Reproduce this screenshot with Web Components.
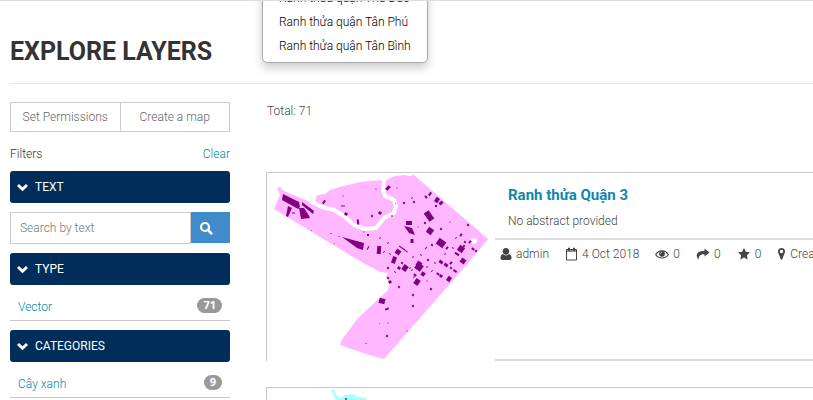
<!DOCTYPE html>
<html lang="en">
<head>
<meta charset="utf-8">
<title>Explore Layers</title>
<style>
body { margin: 0; background: #fff; color: #444; font: 300 12px/20px Roboto, "Liberation Sans", sans-serif; }
</style>
</head>
<body>
<explore-page>
  <suggest-menu slot="menu"></suggest-menu>
  <filter-sidebar slot="sidebar">
    <filter-section label="TEXT"><search-box></search-box></filter-section>
    <filter-section label="TYPE"><filter-row name="Vector" count="71"></filter-row></filter-section>
    <filter-section label="CATEGORIES"><filter-row name="Cây xanh" count="9"></filter-row></filter-section>
  </filter-sidebar>
  <layer-card heading="Ranh thửa Quận 3" abstract="No abstract provided" owner="admin" date="4 Oct 2018"><district-map slot="thumb"></district-map></layer-card>
  <layer-card><river-map slot="thumb"></river-map></layer-card>
</explore-page>
<script>
const define = (name, html) => customElements.define(name, class extends HTMLElement {
  connectedCallback() {
    if (this.shadowRoot) return;
    const t = document.createElement('template');
    t.innerHTML = typeof html === 'function' ? html(this) : html;
    this.attachShadow({ mode: 'open' }).append(t.content.cloneNode(true));
  }
});

const icons = {
  user: ['0 0 12 14', '<path d="M6 1c2 0 3.200 1.300 3.200 3.200S8 7.800 6 7.800 2.800 6.200 2.800 4.200 4 1 6 1z"/><path d="M3 7c.8.900 1.800 1.400 3 1.400S8.200 7.900 9 7c1.600.3 2.500 1.800 2.500 4 0 1.300-.8 2-2 2h-7c-1.200 0-2-.7-2-2 0-2.200.9-3.700 2.500-4z"/>'],
  calendar: ['0 0 13 14', '<path d="M1.500 2.500h10v10.500h-10z" fill="none" stroke="currentColor"/><path d="M1 2.500h11v2.500H1z" opacity=".6"/><path d="M3 .8h2v3H3zM8 .8h2v3H8z"/>'],
  eye: ['0 0 14 14', '<path d="M.7 7.500C3.500 2.600 10.500 2.600 13.300 7.500 10.500 12.200 3.500 12.200.7 7.500z" fill="none" stroke="currentColor" stroke-width="1.100"/><circle cx="7" cy="6.800" r="2.900"/><path d="M5.500 6.800C5.500 5.900 6.100 5.300 7 5.300" stroke="#fff" stroke-width=".7" fill="none"/>'],
  share: ['0 0 14 14', '<path d="M8.500 1.500l5 4-5 4V7.200C4.500 7 2.600 8.400 2.600 12.600 1.200 11 .6 9.400.8 7.800 1.200 5 3.800 3.800 8.500 3.900z"/>'],
  star: ['0 0 14 14', '<path d="M7 1l1.800 3.800 4.200.5-3.100 2.900.8 4.200L7 10.400l-3.700 2 .8-4.200L1 5.300l4.200-.5z"/>'],
  pin: ['0 0 9 14', '<path fill-rule="evenodd" d="M4.500 1C6.600 1 8 2.500 8 4.400c0 1.500-1.600 4.200-2.600 7.500-.2 1.100-1.600 1.100-1.800 0C2.600 8.600 1 5.900 1 4.400 1 2.500 2.400 1 4.500 1zm0 1.800a1.700 1.700 0 1 0 0 3.400 1.700 1.700 0 0 0 0-3.400z"/>'],
  search: ['0 0 14 14', '<circle cx="6" cy="6" r="4" fill="none" stroke="currentColor" stroke-width="2.200"/><path d="M9 9l3.300 3.300" stroke="currentColor" stroke-width="2.600" stroke-linecap="round"/>'],
  chevron: ['0 0 13 14', '<path d="M2 5l4.500 4.300L11 5" fill="none" stroke="currentColor" stroke-width="2.900"/>']
};
define('ui-icon', el => {
  const [box, body] = icons[el.getAttribute('name')];
  const w = box.split(' ')[2];
  return `<style>:host{display:inline-flex;flex:none}svg{display:block;fill:currentColor}</style><svg width="${w}" height="14" viewBox="${box}" aria-hidden="true">${body}</svg>`;
});

define('explore-page', `<style>
  :host { display: block; position: relative; height: 100vh; overflow: hidden; box-sizing: border-box; border-top: 1px solid #ddd; padding: 0 0 0 10px; }
  header { border-bottom: 1px solid #e4e4e4; padding: 34px 0 14px; }
  h1 { margin: 0; font-size: 25px; line-height: 34px; font-weight: 700; color: #333; }
  .cols { display: flex; gap: 36px; padding-top: 18px; }
  ::slotted([slot=sidebar]) { flex: 0 0 220px; }
  main { flex: 1; min-width: 0; }
  .total { margin: -1px 0 51px 1px; }
  ::slotted([slot=menu]) { position: absolute; left: 262px; bottom: calc(100% - 62px); z-index: 2; }
</style>
<slot name="menu"></slot>
<header><h1>EXPLORE LAYERS</h1></header>
<div class="cols"><slot name="sidebar"></slot><main><p class="total">Total: 71</p><slot></slot></main></div>`);

define('suggest-menu', `<style>
  :host { display: block; background: #fff; border: 1px solid #aaa; border-radius: 0 0 5px 5px; box-shadow: 0 5px 10px rgba(0,0,0,.2); padding: 4px 16px; color: #000; line-height: 24px; }
  ul { list-style: none; margin: 0; padding: 0; }
  a { color: inherit; text-decoration: none; white-space: nowrap; }
</style><ul><li><a href="#">Ranh thửa quận Thủ Đức</a></li><li><a href="#">Ranh thửa quận Tân Phú</a></li><li><a href="#">Ranh thửa quận Tân Bình</a></li></ul>`);

define('filter-sidebar', `<style>
  :host { display: block; }
  .actions { display: flex; }
  button { flex: 1; box-sizing: border-box; height: 30px; padding: 0; border: 1px solid #ccc; background: #fff; color: #666; font: inherit; white-space: nowrap; }
  button + button { margin-left: -1px; }
  .bar { display: flex; justify-content: space-between; padding: 12px 0 7px; color: #333; }
  a { color: #0087a8; text-decoration: none; }
</style>
<div class="actions"><button>Set Permissions</button><button>Create a map</button></div>
<div class="bar"><span>Filters</span><a href="#">Clear</a></div><slot></slot>`);

define('filter-section', el => `<style>
  :host { display: block; margin-bottom: 9px; }
  button { display: flex; align-items: center; gap: 6px; width: 100%; height: 32px; border: 0; border-radius: 3px; padding: 0 6px; background: #002d59; color: #fff; font: inherit; font-weight: 400; }
</style><button aria-expanded="true"><ui-icon name="chevron"></ui-icon>${el.getAttribute('label')}</button><slot></slot>`);

define('search-box', `<style>
  :host { display: flex; margin-top: 9px; }
  input { flex: 1; min-width: 0; box-sizing: border-box; height: 32px; border: 1px solid #ccc; padding: 0 9px; font: inherit; color: #444; border-radius: 0; }
  input::placeholder { color: #777; }
  button { width: 39px; height: 31px; border: 0; padding: 0 9px 0 0; background: #428bca; color: #fff; display: flex; align-items: center; justify-content: center; }
</style><input type="text" placeholder="Search by text" aria-label="Search by text"><button aria-label="Search"><ui-icon name="search"></ui-icon></button>`);

define('filter-row', el => `<style>
  :host { display: flex; justify-content: space-between; align-items: center; border-bottom: 1px solid #c8c8c8; padding: 6px 8px 0; height: 29px; }
  a { color: #0087a8; text-decoration: none; padding-top: 2px; }
  span { background: #999; color: #fff; font: 700 11px/13px "Open Sans", sans-serif; padding: 0 6px 2px; border-radius: 8px; }
</style><a href="#">${el.getAttribute('name')}</a><span>${el.getAttribute('count')}</span>`);

define('layer-card', el => {
  const head = el.getAttribute('heading');
  const meta = head ? `<div class="text"><h2><a href="#">${head}</a></h2><p>${el.getAttribute('abstract')}</p></div>
  <ul><li><ui-icon name="user"></ui-icon>${el.getAttribute('owner')}</li><li><ui-icon name="calendar"></ui-icon>${el.getAttribute('date')}</li><li><ui-icon name="eye"></ui-icon>0</li><li><ui-icon name="share"></ui-icon>0</li><li><ui-icon name="star"></ui-icon>0</li><li><ui-icon name="pin"></ui-icon>Create a Map</li></ul>` : '';
  return `<style>
  :host { display: flex; border: solid #c8c8c8; border-width: 1px 0 0 1px; margin-bottom: 26px; overflow: hidden; }
  .body { flex: 1; min-width: 0; box-sizing: border-box; border-bottom: 2px solid #ddd; }
  .text { padding: 10px 13px 7px; border-bottom: 2px solid #ddd; }
  h2 { margin: 0; font-size: 15px; line-height: 24px; font-weight: 700; }
  a { color: #0f87ad; text-decoration: none; }
  p { margin: 4px 0 0; }
  ul { display: flex; gap: 16px; list-style: none; margin: 0; padding: 4px 5px; white-space: nowrap; }
  li { display: flex; align-items: center; gap: 4px; flex: none; }
</style><slot name="thumb"></slot><div class="body">${meta}</div>`;
});

const block = (x, y, w, h, r = 35) => `<rect x="${x - w / 2}" y="${y - h / 2}" width="${w}" height="${h}" transform="rotate(${r} ${x} ${y})"/>`;
const blocks = [
  [324,202,2,4],[343,196,1,1],[343,206,4,1,0],[346,214,3,3],[358,222,2,5,-5],[372,216,2,2],[380,213,3,3],[376,189,1,1],
  [388,188,3,5,45],[397,188,1,1],[404,203,2,2],[412,198,1,2],[414,202,2,2],[426,197,2,3,-35],[430,194,2,4],[437,200,4,5],[441,203,4,3,-35],[436,206,2,2,0],
  [429,216,6,10,-35],[409,223,6,4,0],[430,231,6,6],[441,229,2,2],[441,243,8,7],[412,241,3,4,0],[392,216,2,1,0],[425,223,2,2],[418,227,1,1],[450,222,1,1],
  [379,250,4,8,5],[398,252,5,5],[402,248,7,1],[406,251,4,1],[394,260,4,7,20],[419,264,5,5],[413,257,1,2],[421,255,2,1],[432,245,2,2],[426,248,1,3],
  [461,249,6,6],[457,254,5,2],[463,261,5,5],[451,263,2,3],[441,262,4,3],[445,254,1,2],[447,248,2,3],[465,242,2,2],[470,242,2,3],[464,246,2,2],[473,249,3,2],[476,251,2,2],[468,225,2,2],[461,235,2,3],[456,238,1,2],[453,248,2,1],
  [368,248,1,4],[368,235,2,2,0],[380,238,1,2],[364,232,1,1],[388,243,1,2],[384,252,1,2],[390,254,2,1],[399,268,3,3],[405,268,5,6],[402,263,2,2],[415,275,3,2],[419,267,7,7],[423,274,4,4],[417,282,5,6],[414,277,1,2],[438,274,3,2],[441,276,3,3],[449,279,4,5],[455,271,4,2],[446,265,4,3],[451,268,2,2],[432,271,1,2],[427,281,1,1],[431,289,2,2],[388,278,2,2],[390,282,3,3,-35],[399,287,2,2],[382,301,6,5,15],[387,309,4,2,-20],[413,306,2,2],[413,295,2,2],[387,336,2,2],[388,323,1,1],[407,331,1,1],[435,263,2,1],[428,260,2,2],[410,268,1,2],[395,272,2,1],[388,268,2,2],[412,270,1,2],[427,267,1,2]
].map(b => block(...b)).join('');

define('district-map', `<style>:host{display:block;flex:none}svg{display:block}</style>
<svg width="228" height="188" viewBox="267 173 228 188" role="img" aria-label="District parcels">
<path fill="#ffb8ff" d="M277 188L280 187 284 191 315 204 316 197 318 195 325 194 330 190 340 187 352 184 360 182 371 181 380 180 383 181 387 180 390 178 395 176 404 175 410 176 414 175 488 239 470 261 384 359 376 357 360 352 340 345 341 341 358 318 370 307 388 290 390 283 386 277 388 273 380 272 358 260 274 209 280 195z"/>
<path fill="none" stroke="#fff" stroke-width="4" stroke-linejoin="round" stroke-linecap="round" d="M312 202l10 5 12 3 10 6 10 9 11 4 11-1 8-10 10-5 2-7-2-6-9-4-2-6 1-9"/>
<circle cx="474" cy="241" r="3" fill="#fff"/>
<g fill="#800080"><path d="M283 194l16 8 1 5-2 2-7-4-9-5zM302 202l12 9-1 3-11-9zM288 206l4 2-4 9-2-1zM299 208l5 0 4 6 2 4-9 1-1-6zM342 237l22 6-1 7-6-2zM404 226l8 2 3 7-6-2z"/>${blocks}</g>
<g fill="#c45ac4"><path d="M292 212h3v2h-3zM311 230h1v1h-1zM334 243h1v1h-1zM330 233h2v1h-2zM338 236h2v1h-2zM395 203h1v1h-1zM365 343h2v1h-2zM379 323h1v1h-1z"/></g>
</svg>`);

define('river-map', `<style>:host{display:block;flex:none}svg{display:block}</style>
<svg width="228" height="188" viewBox="267 388 228 188" role="img" aria-label="Layer thumbnail">
<path fill="#a8ffff" d="M331 390l3-1 2 6 4 3 5-3 8-1 5 3 8 1 6 10-20 30-12-30z"/><path fill="#427b7b" d="M345 398h2v2h-2z"/>
</svg>`);
</script>
</body>
</html>
